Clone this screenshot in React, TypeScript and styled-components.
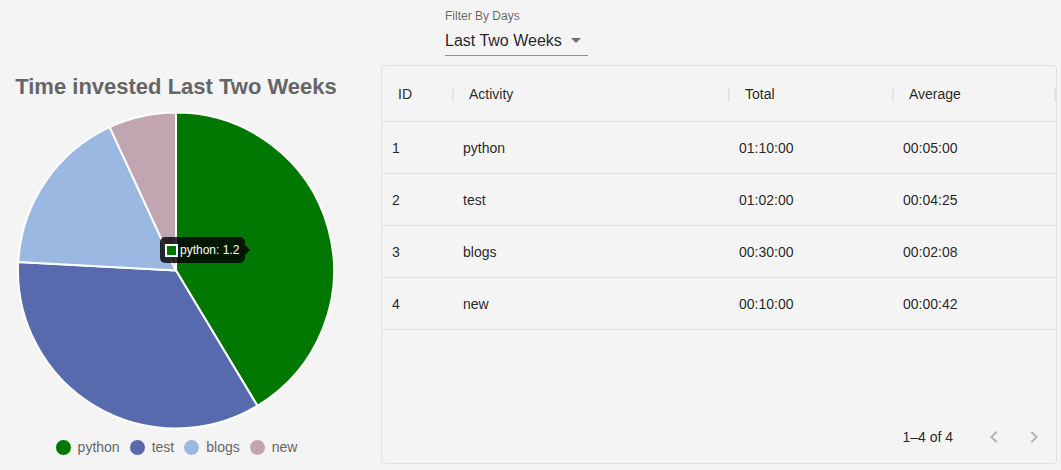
import React from 'react';
import styled, { createGlobalStyle } from 'styled-components';

const GlobalStyle = createGlobalStyle`
  html, body { margin: 0; padding: 0; background: #f4f4f4; }
  body { font-family: "Liberation Sans", Arial, Helvetica, sans-serif; }
  * { box-sizing: border-box; }
`;

type Activity = { id: number; name: string; hours: number; total: string; average: string; color: string };

const data: Activity[] = [
  { id: 1, name: 'python', hours: 1.2, total: '01:10:00', average: '00:05:00', color: '#007800' },
  { id: 2, name: 'test', hours: 1.0, total: '01:02:00', average: '00:04:25', color: '#566aad' },
  { id: 3, name: 'blogs', hours: 0.5, total: '00:30:00', average: '00:02:08', color: '#9bb8e2' },
  { id: 4, name: 'new', hours: 0.2, total: '00:10:00', average: '00:00:42', color: '#c1a6b1' },
];

const columns = [
  { key: 'id', label: 'ID', width: 71 },
  { key: 'name', label: 'Activity', width: 276 },
  { key: 'total', label: 'Total', width: 164 },
  { key: 'average', label: 'Average', width: 162 },
] as const;

const Page = styled.div`
  width: 1061px;
  height: 470px;
  display: flex;
  flex-direction: column;
`;

const FilterBar = styled.div`
  height: 65px;
  padding: 9px 0 0 445px;
`;

const FilterControl = styled.div`
  width: 143px;
  display: flex;
  flex-direction: column;
`;

const FilterLabel = styled.label`
  font-size: 12px;
  line-height: 14px;
  color: rgba(0, 0, 0, 0.6);
`;

const SelectBox = styled.div`
  margin-top: 8px;
  display: flex;
  align-items: center;
  justify-content: space-between;
  padding: 0 7px 5px 0;
  border-bottom: 1px solid rgba(0, 0, 0, 0.42);
  font-size: 16px;
  line-height: 19px;
  color: rgba(0, 0, 0, 0.87);
`;

const DropArrow = styled.span`
  width: 0;
  height: 0;
  border-left: 5px solid transparent;
  border-right: 5px solid transparent;
  border-top: 5px solid rgba(0, 0, 0, 0.54);
`;

const Main = styled.div`
  display: flex;
  flex: 1;
`;

const ChartPanel = styled.div`
  width: 352px;
  display: flex;
  flex-direction: column;
  align-items: center;
`;

const ChartTitle = styled.div`
  margin-top: 9px;
  font-size: 22px;
  line-height: 26px;
  font-weight: bold;
  color: #666;
`;

const PieWrap = styled.div`
  position: relative;
  width: 352px;
  height: 338px;
`;

const Tooltip = styled.div`
  position: absolute;
  left: 160px;
  top: 137px;
  height: 26px;
  padding: 0 6px 0 5px;
  display: flex;
  align-items: center;
  gap: 2px;
  background: rgba(0, 0, 0, 0.8);
  border-radius: 5px;
  color: #fff;
  font-size: 12px;
  white-space: nowrap;
  &::after {
    content: '';
    position: absolute;
    right: -5px;
    top: 8px;
    border-top: 5px solid transparent;
    border-bottom: 5px solid transparent;
    border-left: 5px solid rgba(0, 0, 0, 0.8);
  }
`;

const Swatch = styled.span<{ $color: string }>`
  width: 13px;
  height: 13px;
  background: ${p => p.$color};
  border: 2px solid #fff;
`;

const Legend = styled.div`
  display: flex;
  align-items: center;
  gap: 9px;
  height: 18px;
`;

const LegendItem = styled.div`
  display: flex;
  align-items: center;
  gap: 6px;
  font-size: 14px;
  color: #666;
`;

const LegendDot = styled.span<{ $color: string }>`
  width: 17px;
  height: 17px;
  border-radius: 50%;
  background: ${p => p.$color};
  border: 1.5px solid #fff;
`;

const Card = styled.div`
  margin-left: 29px;
  width: 676px;
  height: 399px;
  border: 1px solid #e0e0e0;
  border-radius: 4px;
  display: flex;
  flex-direction: column;
`;

const HeaderRow = styled.div`
  display: flex;
  height: 56px;
  border-bottom: 1px solid #e0e0e0;
`;

const HeaderCell = styled.div<{ $w: number }>`
  position: relative;
  width: ${p => p.$w}px;
  display: flex;
  align-items: center;
  padding-left: 16px;
  font-size: 14px;
  color: rgba(0, 0, 0, 0.87);
  &::after {
    content: '';
    position: absolute;
    right: -1px;
    top: 21px;
    width: 2px;
    height: 15px;
    background: #e4e4e4;
  }
`;

const Row = styled.div`
  display: flex;
  height: 52px;
  border-bottom: 1px solid #e0e0e0;
`;

const Cell = styled.div<{ $w: number }>`
  width: ${p => p.$w}px;
  display: flex;
  align-items: center;
  padding-left: 10px;
  font-size: 14px;
  color: rgba(0, 0, 0, 0.87);
`;

const Spacer = styled.div`
  flex: 1;
`;

const Footer = styled.div`
  height: 52px;
  display: flex;
  align-items: center;
  justify-content: flex-end;
  padding-right: 2px;
  font-size: 14px;
  color: rgba(0, 0, 0, 0.87);
`;

const PageButtons = styled.div`
  display: flex;
  margin-left: 21px;
`;

const PageButton = styled.button`
  width: 40px;
  height: 40px;
  display: flex;
  align-items: center;
  justify-content: center;
  background: none;
  border: none;
  padding: 0;
  color: rgba(0, 0, 0, 0.26);
`;

function Pie() {
  const cx = 176;
  const cy = 170.5;
  const r = 158;
  const total = data.reduce((s, d) => s + d.hours, 0);
  let angle = -Math.PI / 2;
  return (
    <svg width={352} height={338} viewBox="0 0 352 338">
      {data.map(d => {
        const a0 = angle;
        const a1 = angle + (d.hours / total) * Math.PI * 2;
        angle = a1;
        const x0 = cx + r * Math.cos(a0);
        const y0 = cy + r * Math.sin(a0);
        const x1 = cx + r * Math.cos(a1);
        const y1 = cy + r * Math.sin(a1);
        const large = a1 - a0 > Math.PI ? 1 : 0;
        return (
          <path
            key={d.id}
            d={`M${cx} ${cy} L${x0} ${y0} A${r} ${r} 0 ${large} 1 ${x1} ${y1} Z`}
            fill={d.color}
            stroke="#fff"
            strokeWidth={2}
            strokeLinejoin="round"
          />
        );
      })}
    </svg>
  );
}

export default function App() {
  return (
    <>
      <GlobalStyle />
      <Page>
        <FilterBar>
          <FilterControl>
            <FilterLabel>Filter By Days</FilterLabel>
            <SelectBox>
              <span>Last Two Weeks</span>
              <DropArrow />
            </SelectBox>
          </FilterControl>
        </FilterBar>
        <Main>
          <ChartPanel>
            <ChartTitle>Time invested Last Two Weeks</ChartTitle>
            <PieWrap>
              <Pie />
              <Tooltip>
                <Swatch $color="#007800" />
                <span>python: 1.2</span>
              </Tooltip>
            </PieWrap>
            <Legend>
              {data.map(d => (
                <LegendItem key={d.id}>
                  <LegendDot $color={d.color} />
                  {d.name}
                </LegendItem>
              ))}
            </Legend>
          </ChartPanel>
          <Card>
            <HeaderRow>
              {columns.map(c => (
                <HeaderCell key={c.key} $w={c.width}>{c.label}</HeaderCell>
              ))}
            </HeaderRow>
            {data.map(d => (
              <Row key={d.id}>
                <Cell $w={71}>{d.id}</Cell>
                <Cell $w={276}>{d.name}</Cell>
                <Cell $w={164}>{d.total}</Cell>
                <Cell $w={162}>{d.average}</Cell>
              </Row>
            ))}
            <Spacer />
            <Footer>
              <span>1–4 of 4</span>
              <PageButtons>
                <PageButton aria-label="previous page">
                  <svg width={24} height={24} viewBox="0 0 24 24" fill="currentColor">
                    <path d="M15.41 7.41L14 6l-6 6 6 6 1.41-1.41L10.83 12z" />
                  </svg>
                </PageButton>
                <PageButton aria-label="next page">
                  <svg width={24} height={24} viewBox="0 0 24 24" fill="currentColor">
                    <path d="M10 6L8.59 7.41 13.17 12l-4.58 4.59L10 18l6-6z" />
                  </svg>
                </PageButton>
              </PageButtons>
            </Footer>
          </Card>
        </Main>
      </Page>
    </>
  );
}
